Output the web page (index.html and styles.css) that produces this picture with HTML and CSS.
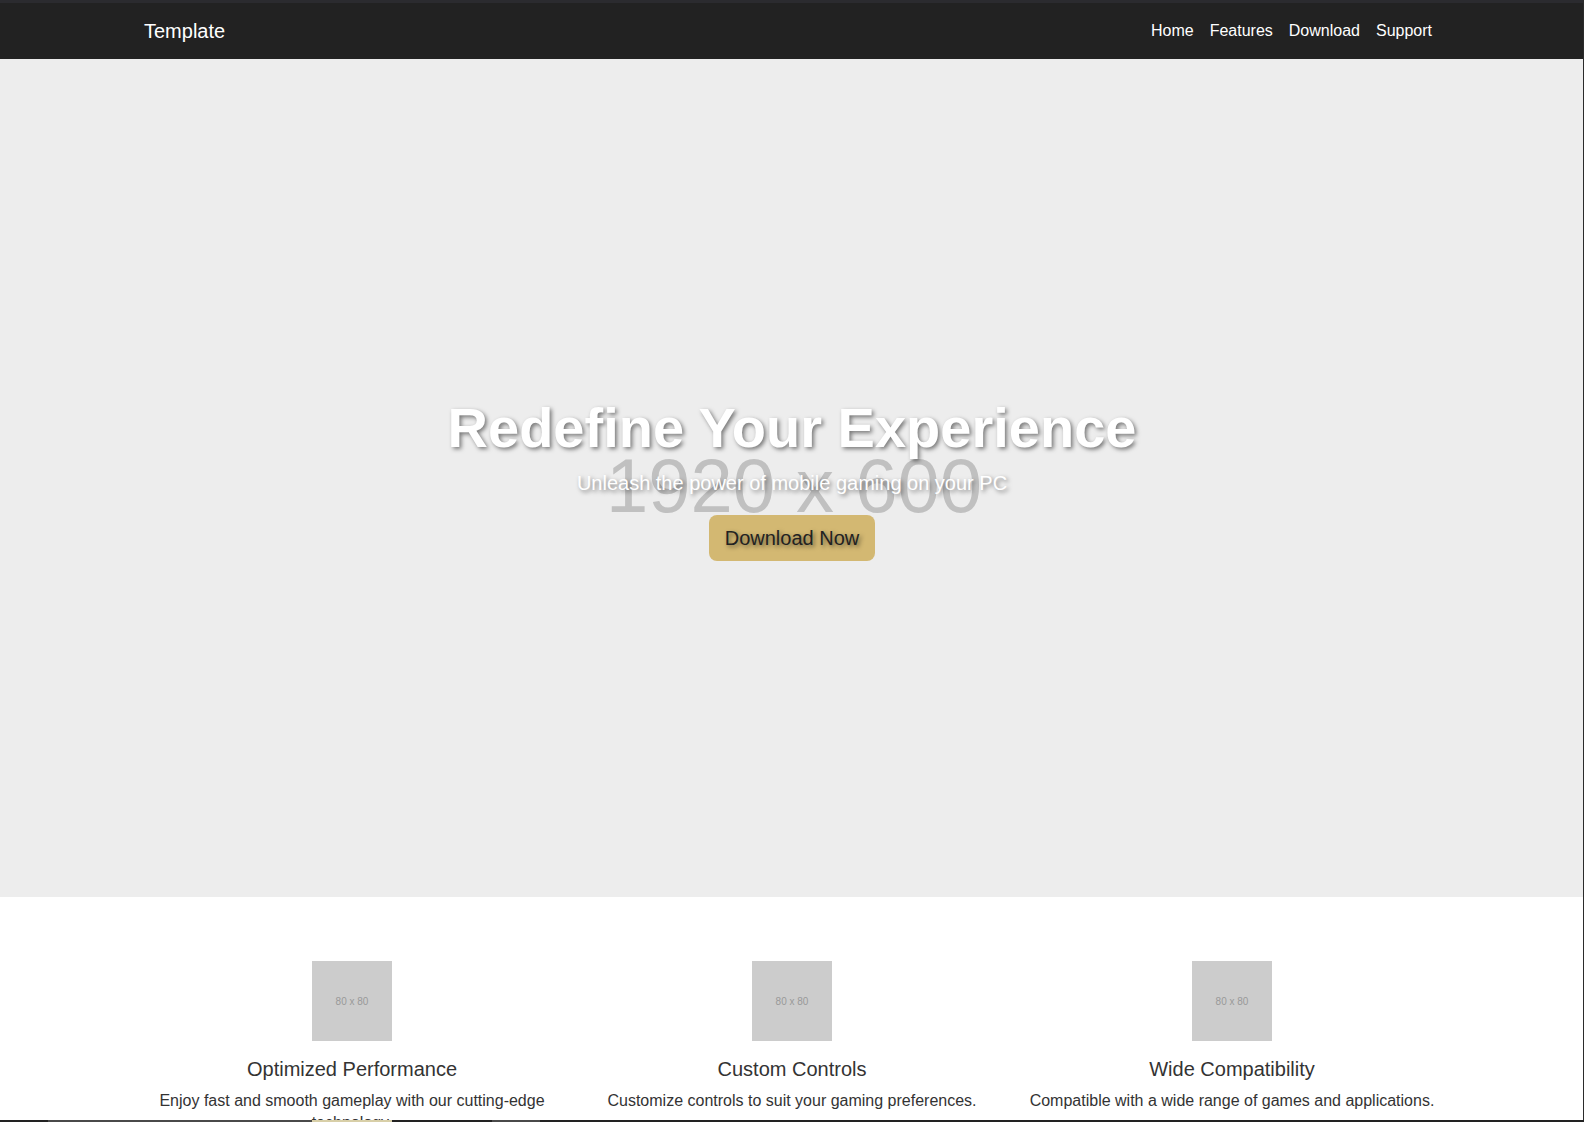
FILE: index.html
```html
<!DOCTYPE html>
<html lang="en">
<head>
<meta charset="utf-8">
<title>Template</title>
<link rel="stylesheet" href="styles.css">
</head>
<body>
<header class="navbar">
  <div class="nav-inner">
    <a class="brand" href="#">Template</a>
    <nav class="nav-links">
      <a href="#">Home</a>
      <a href="#">Features</a>
      <a href="#">Download</a>
      <a href="#">Support</a>
    </nav>
  </div>
</header>

<section class="hero">
  <div class="hero-bg-label">1920 x 600</div>
  <div class="hero-content">
    <h1>Redefine Your Experience</h1>
    <p>Unleash the power of mobile gaming on your PC</p>
    <a class="btn-download" href="#">Download Now</a>
  </div>
</section>

<section class="features">
  <div class="features-grid">
    <div class="feature">
      <div class="ph">80 x 80</div>
      <h3>Optimized Performance</h3>
      <p>Enjoy fast and smooth gameplay with our cutting-edge technology.</p>
    </div>
    <div class="feature">
      <div class="ph">80 x 80</div>
      <h3>Custom Controls</h3>
      <p>Customize controls to suit your gaming preferences.</p>
    </div>
    <div class="feature">
      <div class="ph">80 x 80</div>
      <h3>Wide Compatibility</h3>
      <p>Compatible with a wide range of games and applications.</p>
    </div>
  </div>
</section>

<div class="frame-top"></div>
<div class="frame-right"></div>
<div class="frame-bottom">
  <span class="seg seg-a"></span>
  <span class="seg seg-b"></span>
  <span class="seg seg-c"></span>
</div>
</body>
</html>
```

FILE: styles.css
```css
* { box-sizing: border-box; }

html, body {
  margin: 0;
  padding: 0;
}

body {
  font-family: "Liberation Sans", Arial, sans-serif;
  background: #ffffff;
  color: #333;
  overflow: hidden;
}

/* NAV */
.navbar {
  background: #222222;
  height: 59px;
  padding-top: 3px;
}

.nav-inner {
  width: 1320px;
  margin: 0 auto;
  height: 56px;
  padding: 0 12px;
  display: flex;
  align-items: center;
  justify-content: space-between;
}

.brand {
  color: #ffffff;
  text-decoration: none;
  font-size: 20px;
  line-height: 23px;
}

.nav-links {
  display: flex;
}

.nav-links a {
  color: #ffffff;
  text-decoration: none;
  font-size: 16px;
  line-height: 18px;
  padding: 0 8px;
}

/* HERO */
.hero {
  position: relative;
  height: 838px;
  background: #ededed;
  display: flex;
  align-items: center;
  justify-content: center;
  overflow: hidden;
}

.hero-bg-label {
  position: absolute;
  left: 0;
  right: 0;
  top: 389px;
  text-align: center;
  font-size: 76px;
  line-height: 76px;
  color: #c0c0c0;
  padding-left: 4px;
}

.hero-content {
  position: relative;
  display: flex;
  flex-direction: column;
  align-items: center;
  text-align: center;
}

.hero-content h1 {
  margin: 0 0 12px;
  font-size: 56px;
  line-height: 64px;
  font-weight: bold;
  color: #ffffff;
  text-shadow: 2px 2px 4px rgba(0, 0, 0, 0.5);
}

.hero-content p {
  margin: 0 0 20px;
  font-size: 20px;
  line-height: 23px;
  color: #ffffff;
  text-shadow: 2px 2px 4px rgba(0, 0, 0, 0.5);
}

.btn-download {
  display: inline-block;
  background: #d3b872;
  color: #222222;
  text-decoration: none;
  font-size: 20px;
  line-height: 23px;
  padding: 12px 16px 11px;
  border-radius: 8px;
  text-shadow: 2px 2px 4px rgba(0, 0, 0, 0.5);
}

/* FEATURES */
.features {
  padding-top: 64px;
  background: #ffffff;
}

.features-grid {
  width: 1320px;
  margin: 0 auto;
  display: grid;
  grid-template-columns: repeat(3, 440px);
}

.feature {
  padding: 0 12px;
  text-align: center;
}

.ph {
  width: 80px;
  height: 80px;
  margin: 0 auto;
  background: #cccccc;
  color: #999999;
  font-size: 10px;
  display: flex;
  align-items: center;
  justify-content: center;
}

.feature h3 {
  margin: 17px 0 9px;
  font-size: 20px;
  line-height: 23px;
  font-weight: normal;
  color: #333333;
}

.feature p {
  margin: 0;
  font-size: 16px;
  line-height: 22.4px;
  color: #333333;
}

/* SCREEN FRAME (overlay edges of the captured window) */
.frame-top {
  position: fixed;
  top: 0;
  left: 0;
  right: 0;
  height: 3px;
  background: #2b2b2f;
}

.frame-right {
  position: fixed;
  top: 0;
  right: 0;
  bottom: 0;
  width: 1.5px;
  background: #2b2b2b;
}

.frame-bottom {
  position: fixed;
  left: 0;
  right: 0;
  bottom: 0;
  height: 2px;
  background: #222222;
}

.seg {
  position: absolute;
  top: 0;
  height: 2px;
}

.seg-a { left: 48px; width: 264px; background: #4a4a4a; }
.seg-b { left: 312px; width: 80px; background: #d8cfa8; }
.seg-c { left: 492px; width: 48px; background: #4a4a4a; }
```
